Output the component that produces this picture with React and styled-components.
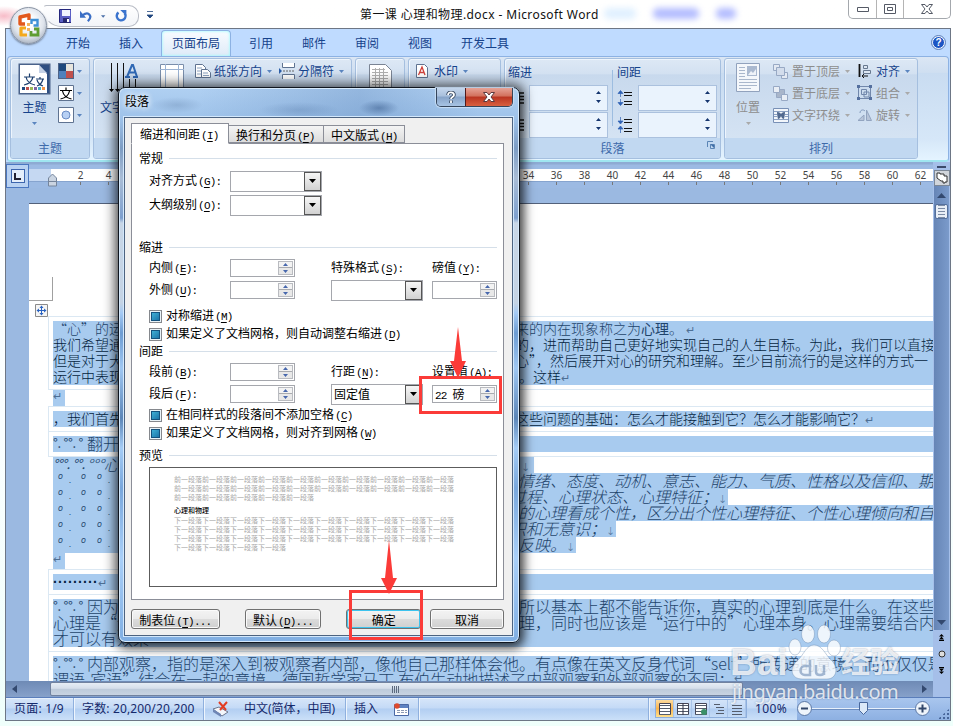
import React from "react";
import styled, { createGlobalStyle, css } from "styled-components";

const Global = createGlobalStyle`
  * { box-sizing: border-box; }
  body { margin: 0; background: #fdfeff; overflow: hidden; }
`;

const ui = css`font-family: "Noto Sans", "Noto Sans CJK SC", sans-serif;`;
const cjk = css`font-family: "Noto Sans CJK SC", sans-serif;`;

const Desktop = styled.div`
  ${cjk}
  position: relative;
  width: 953px;
  height: 726px;
  overflow: hidden;
  padding: 0 2px 5px 5px;
  font-size: 12px;
  line-height: 16px;
  color: #15428b;
  background:
    radial-gradient(ellipse 22px 10px at 4px 16px, #f7bcc8, transparent),
    linear-gradient(#fff, #fafeff 60%, #effffb);
  display: flex;
  flex-direction: column;
`;

/* ---------- title bar ---------- */
const TitleBar = styled.header`
  height: 28px;
  flex: none;
  display: flex;
  align-items: flex-start;
  justify-content: space-between;
`;
const QuickAccess = styled.div`
  display: flex;
  align-items: center;
  gap: 9px;
  width: 96px;
  height: 22px;
  margin: 5px 0 0 38px;
  padding: 0 11px 0 15px;
  border: 1px solid #b9bdc6;
  border-left-color: transparent;
  border-radius: 4px 11px 11px 20px;
  background: linear-gradient(#fff, #f2f4f8);
`;
const Customize = styled.div`margin: 11px 0 0 8px; height: 8px; svg { display: block; }`;
const TitleText = styled.div`
  ${ui}
  color: #111;
  margin: 7px 0 0 207px;
  width: 240px;
  font-size: 12px;
  letter-spacing: 0.42px;
  white-space: nowrap;
`;
const Smudges = styled.div`
  flex: 1;
  display: flex;
  padding: 8px 0 0 4px;
  gap: 17px;
`;
const Smudge = styled.i`
  width: ${(p) => p.$w}px;
  height: 11px;
  border-radius: 5px;
  background: ${(p) => p.$c || "#b4bdff"};
  filter: blur(3px);
`;
const Controls = styled.div`
  display: flex;
  width: 103px;
  height: 19px;
  border: 1px solid #a4a8ad;
  border-top: 0;
  border-radius: 0 0 5px 5px;
  background: #fff;
`;
const Control = styled.div`
  flex: ${(p) => p.$w} 0 0;
  display: grid;
  place-items: center;
  & + & { border-left: 1px solid #b4b4b4; }
`;
const OfficeButton = styled.div`
  position: absolute;
  left: 10px;
  top: 7px;
  width: 37px;
  height: 37px;
  border-radius: 50%;
  border: 1px solid #8a94a4;
  background: radial-gradient(circle at 50% 40%, #fff 0 20%, #dfe4ec 55%, #b4bdca 75%, #eef2f8 100%);
  box-shadow: 0 1px 2px #6d7b90;
  display: grid;
  place-items: center;
`;

/* ---------- window ---------- */
const Window = styled.main`
  flex: 1;
  min-height: 0;
  display: flex;
  flex-direction: column;
  border: 1px solid #6d7685;
  background: #bfdbff;
`;
const TabRow = styled.nav`
  height: 27px;
  flex: none;
  display: flex;
  align-items: flex-end;
  gap: 7px;
  padding: 0 5px 0 49px;
`;
const Tab = styled.div`
  height: 26px;
  padding: 5px 11px 0;
  border-radius: 4px 4px 0 0;
  ${(p) => p.$active && css`
    border: 1px solid #8db2e3;
    border-bottom: 0;
    padding: 4px 10px 0;
    box-shadow: inset 0 0 3px #8ff;
    background: linear-gradient(#f8fbff, #dfebf8);
  `}
`;
const HelpIcon = styled.div`
  margin-left: auto;
  align-self: center;
  width: 13px;
  height: 13px;
  border-radius: 50%;
  background: #1c55c4;
  border: 1px solid #fff;
  outline: 1px solid #5f80b8;
  color: #fff;
  font: bold 10px/11px "Liberation Sans", sans-serif;
  text-align: center;
`;
const Ribbon = styled.section`
  height: 106px;
  flex: none;
  margin: 0 1px;
  padding: 1px 3px 0 2px;
  display: flex;
  gap: 3px;
  border: 1px solid #8db2e3;
  border-bottom: 2px solid #9fe6f0;
  border-radius: 4px;
  background: linear-gradient(#dbe6f4, #cfdff1 15%, #c9dcf1 16%, #d6e7f8 80%, #e4f4ff);
`;
const Group = styled.div`
  flex: none;
  width: ${(p) => p.$w}px;
  height: 101px;
  display: flex;
  flex-direction: column;
  overflow: hidden;
  border: 1px solid #a5bfdf;
  border-radius: 3px;
  box-shadow: inset 1px 1px 0 #eef5fd;
  background: linear-gradient(#dde8f5, #d3e1f1 15%, #c8d9ed 16%, #d8e6f5);
`;
const GroupBody = styled.div`
  flex: 1;
  min-height: 0;
  display: flex;
  padding: ${(p) => p.$pt ?? 1}px 0 0 ${(p) => p.$pl}px;
  gap: ${(p) => p.$gap || 0}px;
`;
const GroupLabel = styled.div`
  height: 20px;
  flex: none;
  display: grid;
  grid-template-columns: 1fr auto 1fr;
  align-items: center;
  background: #c1d8f1;
  color: #3e6aaa;
  &::before { content: ""; }
  svg { display: block; justify-self: end; margin: -6px 5px 0 0; }
`;
const Big = styled.div`
  width: ${(p) => p.$w}px;
  height: 65px;
  padding-top: ${(p) => p.$pt ?? 3}px;
  flex: none;
  display: flex;
  flex-direction: column;
  align-items: center;
  white-space: nowrap;
  color: ${(p) => (p.$off ? "#8d8d8d" : "inherit")};
  svg { flex: none; }
`;
const BigText = styled.span`margin: auto 0 7px;`;
const Stack = styled.div`
  display: flex;
  flex-direction: column;
  width: ${(p) => p.$w}px;
  flex: none;
`;
const Item = styled.div`
  height: 22px;
  display: flex;
  align-items: center;
  gap: ${(p) => p.$gap ?? 0}px;
  white-space: nowrap;
  color: ${(p) => (p.$off ? "#8d8d8d" : "#15428b")};
`;
const IconSlot = styled.span`width: ${(p) => p.$w}px; flex: none; display: flex; align-items: center;`;
const ItemText = styled.span`margin-right: 5px;`;
const IndentColumn = styled.div`
  width: ${(p) => p.$w}px;
  flex: none;
  padding: 0 ${(p) => p.$pr || 0}px 0 ${(p) => p.$pl}px;
  ${(p) => p.$line && css`background: linear-gradient(#9dbde0, #9dbde0) 0 11px / 1px 56px no-repeat;`}
`;
const IndentTitle = styled.div`height: 26px; padding-top: 5px;`;
const IndentRow = styled.div`
  display: flex;
  align-items: center;
  justify-content: space-between;
  height: 26px;
  margin-bottom: 1px;
`;
const RibbonInput = styled.div`
  width: 79px;
  height: 26px;
  border: 1px solid #abc1de;
  background: #eaf3fd;
  display: flex;
  justify-content: flex-end;
  padding: 5px 6px 0 0;
`;

/* ---------- workspace ---------- */
const Workspace = styled.div`
  flex: 1;
  min-height: 0;
  display: flex;
  background: #9bb9e1;
`;
const Column = styled.div`
  width: 927px;
  flex: none;
  display: flex;
  flex-direction: column;
`;
const RulerRow = styled.div`
  height: 26px;
  flex: none;
  display: flex;
  padding-top: 2px;
  background: linear-gradient(#8eabd3 2px, #9cbae3 3px);
`;
const TabSelector = styled.div`
  width: 24px;
  height: 24px;
  border: 1px solid #4a77c0;
  background: #b9d2f2;
  display: grid;
  place-items: center;
`;
const SelectorFace = styled.div`
  width: 14px;
  height: 14px;
  border: 1px solid #3d66ae;
  background: #e4eefb;
  display: grid;
  place-items: center;
`;
const RulerMargin = styled.div`
  width: 23px;
  height: 12px;
  margin-top: 5px;
  background: #c5d8f2;
  box-shadow: 0 1px 0 #86a4cf;
`;
const RulerScale = styled.div`
  ${ui}
  flex: 1;
  height: 12px;
  margin-top: 5px;
  padding-left: 14px;
  display: flex;
  background: #fff;
  box-shadow: 0 1px 0 #86a4cf;
  font-size: 10px;
  line-height: 12px;
  color: #444;
`;
const Mark = styled.span`
  width: 28px;
  flex: none;
  text-align: center;
  padding-left: 3px;
  &::after { content: ""; display: block; width: 1px; height: 3px; margin: 1px auto; background: #777; }
`;
const IndentMarker = styled.div`position: absolute; left: 48px; top: 173px;`;
const Canvas = styled.div`
  flex: 1;
  min-height: 0;
  padding: 15px 0 0 23px;
`;
const Page = styled.article`
  position: relative;
  height: 100%;
  background: #fff;
  border-top: 1px solid #53617a;
  overflow: hidden;
  padding: 112px 0 0 19px;
`;
const CropMark = styled.i`
  position: absolute;
  left: 0;
  top: 73px;
  width: 24px;
  height: 24px;
  border: solid #a0a0a0;
  border-width: 0 1px 1px 0;
`;
const MoveHandle = styled.div`position: absolute; left: 6px; top: 100px; height: 13px; svg { display: block; }`;
const Block = styled.div`
  height: ${(p) => p.$h}px;
  padding: ${(p) => p.$pt}px 0 0 ${(p) => (p.$open ? 5 : 4)}px;
  border-top: 1px solid #dbe8f3;
  ${(p) => !p.$open && css`border-left: 1px solid #dbe8f3;`}
`;
const LineBox = styled.div`
  height: 16px;
  width: ${(p) => (p.$w ? p.$w + "px" : "auto")};
  display: flex;
  overflow: hidden;
  white-space: pre;
  background: #a8cbef;
  font-size: ${(p) => p.$size || 14}px;
  font-weight: 300;
  line-height: 14px;
  color: ${(p) => (p.$dark ? "#041e3e" : "#1f446b")};
  font-style: ${(p) => (p.$italic ? "italic" : "normal")};
`;
const Lead = styled.span`
  flex: none;
  width: ${(p) => p.$w}px;
  overflow: hidden;
`;
const Rest = styled.span`flex: none;`;
const Spaces = styled.span`
  display: inline-block;
  flex: none;
  width: 34px;
  font-size: 13px;
  line-height: 13px;
  font-weight: 400;
  letter-spacing: -0.3px;
  overflow: hidden;
  vertical-align: top;
`;
const RowMarks = styled.span`
  display: flex;
  padding-left: 5px;
  font: italic 8px/8px "DejaVu Sans", sans-serif;
`;
const RowMark = styled.span`
  width: ${(p) => p.$w}px;
  padding-top: ${(p) => p.$pt || 0}px;
`;
const Dots = styled.span`font: bold 14px/16px "Liberation Sans", sans-serif; letter-spacing: 0.33px;`;
const Return = styled.span`
  font-family: "DejaVu Sans", sans-serif;
  font-size: 11px;
  font-style: normal;
  color: #4d6f94;
`;

/* ---------- scrollbars ---------- */
const SideBar = styled.aside`
  width: 17px;
  flex: none;
  display: flex;
  flex-direction: column;
  align-items: center;
  background: #a5bfe9;
`;
const Splitter = styled.i`width: 9px; height: 2px; margin: 4px 0 2px; background: #3b4a6b;`;
const RulerToggle = styled.div`
  width: 16px;
  height: 16px;
  border: 1px solid #7c8796;
  background: #d1d5db;
  display: grid;
  place-items: center;
`;
const Track = styled.div`
  width: 15px;
  height: 444px;
  display: flex;
  flex-direction: column;
  align-items: center;
  justify-content: space-between;
  padding: 7px 0 5px;
  background: linear-gradient(90deg, #6685b6, #7b9bcb);
`;
const Thumb = styled.div`
  width: 13px;
  height: 15px;
  border: 1px solid #55709c;
  border-radius: 2px;
  background: linear-gradient(90deg, #e9eff7 2px, transparent 2px 9px, #e9eff7 9px), repeating-linear-gradient(#7b8ba5 0 1px, #e7edf5 1px 3px);
`;
const TrackTop = styled.div`display: flex; flex-direction: column; align-items: center; gap: 6px;`;
const Browse = styled.div`flex: 1; display: flex; flex-direction: column; align-items: center; padding-top: 4px; gap: 9px;`;
const HScroll = styled.div`
  height: 16px;
  flex: none;
  display: flex;
  align-items: center;
  justify-content: space-between;
  padding: 0 6px;
  background: linear-gradient(#6e8ab5, #86a1ca);
`;
const HThumb = styled.div`
  width: 693px;
  height: 14px;
  margin: 0 178px 0 31px;
  border: 1px solid #71829f;
  border-radius: 2px;
  background: linear-gradient(#e6edf5, #d5deea 45%, #bdcada 50%, #c8d3e2);
  display: grid;
  place-items: center;
`;
const Grip = styled.i`width: 8px; height: 7px; background: repeating-linear-gradient(90deg, #5c6a7e 0 1px, transparent 1px 2px);`;

/* ---------- status bar ---------- */
const Status = styled.footer`
  ${ui}
  height: 23px;
  flex: none;
  display: flex;
  border-top: 1px solid #5a7ebb;
  box-shadow: inset 0 1px 0 #e6f0fc;
  background: linear-gradient(#d7e6f9, #c4daf6 45%, #b2cef2 50%, #cbe0f8);
  color: #15296b;
  font-size: 12px;
`;
const Cell = styled.div`
  width: ${(p) => p.$w}px;
  flex: none;
  padding-left: 8px;
  display: flex;
  align-items: center;
  white-space: nowrap;
  letter-spacing: ${(p) => p.$ls || 0}px;
  border-right: ${(p) => (p.$plain ? 0 : 1)}px solid #8fb0de;
  box-shadow: ${(p) => (p.$plain ? "none" : "1px 0 0 #eef5fd")};
`;
const Views = styled.div`
  width: 92px;
  height: 19px;
  margin: 1px 0 0 6px;
  border: 1px solid #8daedc;
  display: flex;
`;
const View = styled.div`
  flex: 1;
  display: grid;
  place-items: center;
  border-right: 1px solid #a9c4e8;
  background: ${(p) => (p.$on ? "linear-gradient(#fbdba0,#fbb44d 50%,#ffe08c)" : "none")};
`;
const ZoomText = styled.div`width: 50px; padding: 3px 0 0 8px; letter-spacing: 0.4px;`;
const ZoomArea = styled.div`
  flex: 1;
  display: flex;
  align-items: center;
  padding-bottom: 1px;
  background: linear-gradient(#a9c6ee, #8db0e2);
`;
const Knob = styled.div`
  width: 15px;
  height: 15px;
  border: 1px solid #5a77a5;
  border-radius: 50%;
  background: #eef4fb;
  display: grid;
  place-items: center;
`;
const Rail = styled.div`
  width: 103px;
  height: 1px;
  background: #e7f0fb;
  box-shadow: 0 1px 0 #6d8ec0;
  display: flex;
  align-items: center;
  justify-content: center;
`;
const SizeGrip = styled.i`
  align-self: flex-end;
  width: 12px;
  height: 11px;
  margin-left: 8px;
  background: radial-gradient(#47659a 1.3px, transparent 1.5px) 0 0 / 4px 4px;
  clip-path: polygon(100% 0, 100% 100%, 0 100%);
`;

/* ---------- dialog ---------- */
const Dialog = styled.section`
  position: absolute;
  left: 118px;
  top: 87px;
  width: 402px;
  height: 556px;
  display: flex;
  flex-direction: column;
  padding: 0 6px 6px 5px;
  border: 1px solid #10161f;
  border-radius: 7px;
  box-shadow: inset 0 0 0 1px #d6e9fb, 0 0 12px 4px rgba(0, 0, 0, 0.55), 2px 4px 10px rgba(0, 0, 0, 0.45);
  background:
    radial-gradient(ellipse 26px 8px at 58px 17px, rgba(80, 110, 150, 0.25), transparent),
    radial-gradient(ellipse 40px 8px at 180px 22px, rgba(60, 95, 145, 0.22), transparent),
    radial-gradient(ellipse 20px 8px at 260px 20px, rgba(50, 85, 135, 0.5), transparent),
    linear-gradient(90deg, transparent 20%, rgba(40, 84, 146, 0.2) 60%, transparent 90%) 0 0 / 100% 30px no-repeat,
    linear-gradient(#b0d0f2 0, #9fc3ea 30px, #7d9dc4 60px, #a9bdd6 90px, #7d9fce 130px, #c8d6e6 135px, #c4d3e4 215px, #a4caf5 225px, #6d9cd2 245px, #9fc7f2 280px, #5c86b8 330px, #a5ccf5 360px, #79a7dc 400px, #a9cff8 470px, #80aee2);
  color: #000;
`;
const DialogTitle = styled.div`
  height: 29px;
  flex: none;
  display: flex;
  justify-content: space-between;
  padding: 5px 0 0 1px;
`;
const Caption = styled.span`text-shadow: 0 0 6px #fff, 0 0 6px #fff;`;
const CaptionButtons = styled.div`
  display: flex;
  width: 77px;
  height: 19px;
  margin-top: -5px;
  border: 1px solid #35455b;
  border-top: 0;
  border-radius: 0 0 5px 5px;
  overflow: hidden;
  box-shadow: 0 0 1px 1px #c9dff5;
`;
const CaptionButton = styled.div`
  width: ${(p) => p.$w}px;
  display: grid;
  place-items: center;
  border-left: ${(p) => (p.$close ? "1px solid #50191a" : 0)};
  background: ${(p) => (p.$close
    ? "linear-gradient(#e6a397,#d2705c 45%,#b93421 50%,#d9603f)"
    : "linear-gradient(#c4d6ec,#a8bfdc 45%,#86a3c8 50%,#a8c4e4)")};
`;
const Client = styled.div`
  flex: 1;
  min-height: 0;
  padding: 6px 8px 0 6px;
  border: 1px solid #4d6380;
  box-shadow: 0 0 0 1px #d3e8fc;
  background: #f0f0f0;
  display: flex;
  flex-direction: column;
`;
const DialogTabs = styled.div`display: flex; align-items: flex-end; height: 19px; position: relative;`;
const DialogTab = styled.div`
  width: ${(p) => p.$w}px;
  height: ${(p) => (p.$on ? 21 : 18)}px;
  margin-bottom: ${(p) => (p.$on ? -1 : 0)}px;
  padding: ${(p) => (p.$on ? 2 : 1)}px 0 0 ${(p) => (p.$on ? 8 : 7)}px;
  border: 1px solid #8b8e98;
  border-bottom-color: ${(p) => (p.$on ? "#fff" : "#8b8e98")};
  margin-left: ${(p) => (p.$on ? 0 : -1)}px;
  background: ${(p) => (p.$on ? "#fff" : "linear-gradient(#f4f4f4,#dcdcdc)")};
  white-space: nowrap;
`;
const Panel = styled.div`
  height: 457px;
  flex: none;
  padding: 6px 6px 0 7px;
  border: 1px solid #8b8e98;
  background: #fff;
`;
const Section = styled.div`
  height: 16px;
  margin-top: ${(p) => p.$mt || 0}px;
  display: flex;
  align-items: center;
  gap: 6px;
  &::after { content: ""; flex: 1; height: 1px; background: #d5dfe9; }
`;
const Fields = styled.div`
  display: grid;
  grid-template-columns: 81px 101px 101px 66px;
  align-items: center;
  height: ${(p) => p.$h}px;
  margin: ${(p) => p.$mt || 0}px 0 0 10px;
  white-space: nowrap;
`;
const Latin = styled.span`
  font-family: "Liberation Mono", monospace;
  font-size: 11px;
  letter-spacing: -0.75px;
  margin-left: ${(p) => (p.$gap ? 1 : 0)}px;
  u { text-underline-offset: 2px; }
`;
const Combo = styled.div`
  width: 92px;
  height: 21px;
  border: 1px solid #a5a7ad;
  display: flex;
  justify-content: space-between;
  padding-left: 2px;
  line-height: 18px;
`;
const ComboArrow = styled.div`
  width: 17px;
  height: 19px;
  border: 1px solid #555;
  background: linear-gradient(#f6f6f6, #d2d2d2);
  display: grid;
  place-items: center;
`;
const Spin = styled.div`
  width: 65px;
  height: 18px;
  border: 1px solid #a5a7ad;
  display: flex;
  justify-content: space-between;
  padding: 1px 1px 0 2px;
  line-height: 14px;
`;
const SpinButtons = styled.div`
  width: 15px;
  height: 14px;
  border: 1px solid #b9bbc0;
  background: linear-gradient(#f3f3f3 5px, #a9abb0 5px 6px, #e8e8e8 6px);
  display: grid;
  place-items: center;
`;
const Check = styled.div`
  height: 18px;
  margin: ${(p) => p.$mt || 0}px 0 0 10px;
  display: flex;
  align-items: center;
  white-space: nowrap;
  gap: 4px;
`;
const CheckBox = styled.i`
  width: 13px;
  height: 13px;
  border: 1px solid #85888d;
  box-shadow: inset 0 0 0 1px #e9f3f8, inset 0 0 0 2px #14527e;
  background: linear-gradient(135deg, #49c0e2, #12659c);
`;
const Preview = styled.div`
  width: 348px;
  height: 120px;
  margin: 4px 0 0 10px;
  padding: 7px 0 0 24px;
  border: 1px solid #5c5c5c;
  font-size: 7px;
  line-height: 9px;
  color: #a8a8a8;
  white-space: nowrap;
`;
const PreviewTitle = styled.div`color: #000; height: 10px; margin-top: 4px; font-weight: 500;`;
const Buttons = styled.div`display: flex; padding-top: 9px;`;
const Button = styled.div`
  width: ${(p) => p.$w}px;
  height: 20px;
  margin-right: ${(p) => p.$mr || 0}px;
  border: 1px solid #707070;
  border-radius: 3px;
  box-shadow: ${(p) => (p.$primary ? "inset 0 0 0 1px #3dc3ee" : "inset 0 0 0 1px #fafafa")};
  background: linear-gradient(#f3f3f3, #ebebeb 48%, #dcdcdc 50%, #cfcfcf);
  text-align: center;
  line-height: 19px;
`;

/* ---------- annotations and watermark ---------- */
const Highlight = styled.i`
  position: absolute;
  left: ${(p) => p.$x}px;
  top: ${(p) => p.$y}px;
  width: ${(p) => p.$w}px;
  height: ${(p) => p.$h}px;
  border: 3px solid #fb3b38;
`;
const Arrow = styled.svg`
  position: absolute;
  left: ${(p) => p.$x}px;
  top: ${(p) => p.$y}px;
`;
const Watermark = styled.div`
  position: absolute;
  left: 730px;
  top: 620px;
  width: 180px;
  height: 86px;
  color: rgba(255, 255, 255, 0.8);
  text-shadow: 0 0 2px rgba(70, 100, 140, 0.6);
`;
const Paw = styled.svg`position: absolute; left: 57px; top: 3px;`;
const Brand = styled.div`
  display: flex;
  align-items: flex-end;
  height: 60px;
  font: bold 37px/34px "Liberation Sans", "Noto Sans CJK SC", sans-serif;
`;
const BrandLatin = styled.span`width: 111px;`;
const BrandCjk = styled.span`font-size: 29px; white-space: nowrap;`;
const Site = styled.div`
  font: 20px/24px "Noto Sans", sans-serif;
  margin-left: 2px;
  letter-spacing: -0.4px;
`;

/* ---------- icons ---------- */
const Down = ({ c = "#5b85bf", w = 5 }) => (
  <svg width={w} height="3" viewBox="0 0 5 3"><path d="M0 0h5L2.5 3z" fill={c} /></svg>
);
const UpDown = ({ c = "#15356e", gap = 7, w = 5 }) => (
  <svg width={w} height={gap + 6} viewBox={`0 0 5 ${gap + 6}`}>
    <path d={`M0 3h5L2.500 0zM0 ${gap + 3}h5L2.500 ${gap + 6}z`} fill={c} />
  </svg>
);
const Logo = () => (
  <svg width="24" height="26" viewBox="0 0 24 26" fill="none">
    <path d="M8 11H3V4l9-2v5" stroke="#e2581c" strokeWidth="3.400" strokeLinejoin="round" />
    <path d="M14.500 11V7h6v5.500h-4" stroke="#3f91d6" strokeWidth="2.400" />
    <path d="M10 22H4v-7h5" stroke="#f4a91c" strokeWidth="3.200" strokeLinejoin="round" />
    <path d="M14 18v4h7v-6h-4" stroke="#5f9d32" strokeWidth="2.800" />
    <path d="M10 10h3v3h-3zM10 15h3v3h-3z" fill="#f3b25c" />
  </svg>
);
const SaveIcon = () => (
  <svg width="14" height="14"><path d="M.5.5h13v13H.5z" fill="#5a5fc4" stroke="#25277c" /><path d="M3 1h8v6H3z" fill="#eef3fd" /><path d="M4 9h6v5H4z" fill="#272a6f" /><path d="M8 10h2v3H8z" fill="#fff" /></svg>
);
const UndoIcon = () => (
  <svg width="14" height="13" viewBox="0 0 14 13" fill="none"><path d="M3 5c7-5 12 1 6 7" stroke="#3b6fc5" strokeWidth="2.600" /><path d="M0 0v8h7z" fill="#3b6fc5" /></svg>
);
const RedoIcon = () => (
  <svg width="14" height="14" viewBox="0 0 14 14" fill="none"><path d="M4 3a5 5 0 1 0 7 1" stroke="#3b74ce" strokeWidth="2.800" /><path d="M6 0h7v7z" fill="#3b74ce" /></svg>
);
const ThemeIcon = () => (
  <svg width="33" height="32"><path d="M.5.500h32v31H.5z" fill="#4a628a" /><path d="M2 2h29v28H2z" fill="#fff" /><path d="M21 2h10v28h-2V11z" fill="#2f4f82" /><path d="M21 2v8h8z" fill="#c5d2e6" /><path d="M6 14h11M11.500 10.500v3.500M8 14c1 5 4 7 9 8M15 14c-1 4-4 7-9 8M18 16h8M22 14v2M19 17c1 3 3 5 6 6M25 16c-1 4-3 6-6 7" stroke="#1c3e6e" fill="none" strokeWidth="1.200" />{["#1f497d", "#c0504d", "#9bbb59", "#8064a2", "#4bacc6", "#f79646"].map((c, i) => <path key={c} d={`M${4 + i * 4} 24h3v3h-3z`} fill={c} />)}</svg>
);
const ColorsIcon = () => (
  <svg width="16" height="16"><path d="M0 0h16v16H0z" fill="#4f6487" /><path d="M1 1h7v7H1z" fill="#1f497d" /><path d="M8 1h7v7H8z" fill="#e7e5dd" /><path d="M1 8h7v7H1z" fill="#4f81bd" /><path d="M8 8h7v7H8z" fill="#c0504d" /></svg>
);
const FontsIcon = () => (
  <svg width="16" height="16"><path d="M.5.500h15v15H.5z" fill="#fff" stroke="#5f7391" /><path d="M2 5.500h12M8 2.500v3M4.500 6c1 5 4 7 9 8M11.500 6c-1 5-4 7-9 8" stroke="#000" fill="none" strokeWidth="1.200" /></svg>
);
const EffectsIcon = () => (
  <svg width="16" height="16"><path d="M.5.500h15v15H.5z" fill="#fff" stroke="#5f7391" /><circle cx="8" cy="8" r="4" fill="#b7d0f4" stroke="#6b8cc4" /></svg>
);
const TextDirIcon = () => (
  <svg width="30" height="32"><path d="M2.500 0v28M8.500 0v28M14.500 0v28M20.500 16v12M26.500 16v12" stroke="#111" /><path d="M0 26h5l-2.500 3zM6 26h5l-2.500 3z" /><path d="M16 14h5M24 14h5M18 14l5-12h1l4 12M19.500 9.500h7" stroke="#2f68b4" strokeWidth="2" fill="none" /></svg>
);
const MarginsIcon = () => (
  <svg width="24" height="30"><path d="M.5.500h23v29H.5z" fill="#fff" stroke="#7a8eab" /><path d="M5.500 0v30M18.500 0v30M0 5.500h24" stroke="#9bb3d3" /></svg>
);
const OrientIcon = () => (
  <svg width="17" height="15"><path d="M.5.500h7l3 3v10H.5z" fill="#fff" stroke="#5f7391" /><path d="M6.500 5.500h6l3 3v5h-9z" fill="#fff" stroke="#5f7391" /><path d="M2 4h5M2 7h4M2 10h4M8 9h5M8 11.500h6" stroke="#8da3c1" /></svg>
);
const BreakIcon = () => (
  <svg width="16" height="16"><path d="M3.500 0v4.500h12V0M3.500 16v-4.500h12V16" fill="#fff" stroke="#5f7391" /><path d="M4 8h12" stroke="#666" strokeDasharray="2 1" /><path d="M0 5l3 3-3 3z" fill="#2c5ea8" /></svg>
);
const PaperIcon = () => (
  <svg width="23" height="30"><path d="M.5.500h16l6 6v23H.5z" fill="#fff" stroke="#7a8494" /><path d="M3 5.500h13M3 8.500h16M3 11.500h16M3 14.500h16M3 17.500h16M3 20.500h16M3 23.500h16M6.500 4v22M10.500 4v22M14.500 4v22" stroke="#b0b0b0" /></svg>
);
const WaterIcon = () => (
  <svg width="12" height="14"><path d="M.5.500h8l3 3v10H.5z" fill="#fff" stroke="#5f7391" /><path d="M2.500 11L6 3l3 8M3.500 8.500h5" stroke="#d0413b" fill="none" strokeWidth="1.300" /></svg>
);
const IndentIcon = () => (
  <svg width="17" height="12"><path d="M3 1h13M9 4.500h7M9 7.500h7M3 11h13" stroke="#111" strokeWidth="1.300" /><path d="M8 6H3M5 3.500L2 6l3 2.500" stroke="#2f62b4" fill="none" /></svg>
);
const SpaceIcon = ({ flip }) => (
  <svg width="17" height="16"><path d="M7 2.500h8M7 5.500h8M7 11.500h8M7 14.500h8" stroke="#111" /><path d={flip ? "M3.500 0v6M1 4l2.500 3L6 4zM3.500 16v-6M1 12l2.500-3L6 12z" : "M3.500 7V1M1 3.500l2.500-3 2.500 3zM3.500 9v6M1 12.500l2.500 3 2.500-3z"} fill="#2f62b4" stroke="#2f62b4" strokeWidth=".7" /></svg>
);
const PositionIcon = () => (
  <svg width="24" height="29"><path d="M.5.500h23v28H.5z" fill="#f4f7fb" stroke="#91a2bd" /><path d="M3 4.500h6M3 7.500h6M3 10.500h6M3 13.500h6M3 16.500h18M3 19.500h18M3 22.500h18M3 25.500h12" stroke="#a9b7cc" /><path d="M11 3h10v10H11z" fill="#aab9d0" /><path d="M12 12l3-4 2 2 3-4v6z" fill="#eef2f8" /></svg>
);
const LayerIcon = ({ back }) => (
  <svg width="15" height="15">
    {!back && <path d="M.5.500h6v6h-6zM8.500 8.500h6v6h-6z" fill="#e3e9f2" stroke="#98a9c4" />}
    <path d="M3.500 3.500h8v8h-8z" fill={back ? "#a9b6ca" : "#d3ddec"} stroke="#98a9c4" />
    {back && <path d="M.5.500h6v6h-6zM8.500 8.500h6v6h-6z" fill="#e9eef5" stroke="#98a9c4" />}
  </svg>
);
const WrapIcon = () => (
  <svg width="16" height="15"><path d="M.5.500h15v14H.5z" fill="#f2f6fb" stroke="#7890b6" /><path d="M1 3.500h14M1 11.500h14M1 6.500h3M12 6.500h3M1 8.500h3M12 8.500h3" stroke="#8ca1c2" /><path d="M4 4c3 0 4 2 4 2s1-2 4-2c0 3-1 7-1 7s-2 0-3-3c-1 3-3 3-3 3s-1-4-1-7" fill="#51698f" /></svg>
);
const AlignIcon = () => (
  <svg width="16" height="14"><path d="M2.500 0v13" stroke="#111" strokeWidth="1.800" /><path d="M6.500 1.500h4v3h-4zM6.500 6.500h7v3h-7z" fill="#dce6f2" stroke="#67788f" /><path d="M5 12h6M7 10l-2 2 2 2" stroke="#111" fill="none" /></svg>
);
const GroupIcon = () => (
  <svg width="16" height="16"><path d="M1.500 1.500h12v12h-12zM4.500 4.500h5v5h-5zM7 7h5v5H7z" fill="none" stroke="#7187ab" /><path d="M0 0h3v3H0zM12 0h3v3h-3zM0 12h3v3H0zM12 12h3v3h-3z" fill="#55709f" /></svg>
);
const RotateIcon = () => (
  <svg width="16" height="14"><path d="M1 12.500h6V7zM9.500 2v10.500h5z" fill="#b7c4d8" stroke="#92a4c0" /><path d="M3 5c0-3 3-4 5-2" stroke="#8299bd" fill="none" /></svg>
);
const LauncherIcon = () => (
  <svg width="8" height="8"><path d="M.5 6V.500H6M3.500 3.500h4v4h-4z" stroke="#5b85b5" fill="none" /><path d="M3 3l4 4V4z" fill="#3f6ea8" /></svg>
);
const MoveIcon = () => (
  <svg width="13" height="13"><path d="M.5.500h12v12H.5z" fill="#f5f5f5" stroke="#8a8a8a" /><path d="M6.500 2v9M2 6.500h9" stroke="#2a62c0" /><path d="M6.500 1.500L4.500 4h4zM6.500 11.500l-2-2.500h4zM1.500 6.500L4 4.500v4zM11.500 6.500L9 4.500v4z" fill="#2a62c0" /></svg>
);
const ViewIcon = ({ kind }) => (
  <svg width="12" height="12">
    {kind < 3 && <path d="M.5.500h11v11H.5z" fill="#fff" stroke="#445" />}
    <path d={kind === 3 ? "M1 1.500h6M3 4.500h8M5 7.500h6M3 10.500h8" : "M1 2.500h10M1 5.500h10M1 8.500h10M1 11.500h10"} stroke="#555d6c" />
    {kind === 1 && <path d="M6 0v12" stroke="#334" />}
    {kind === 2 && <circle cx="9" cy="9" r="3" fill="#3b8f68" />}
  </svg>
);
const ProofIcon = () => (
  <svg width="17" height="16"><path d="M1 8l6-2 9 5-6 4z" fill="#f4f7fb" stroke="#6d7890" /><path d="M1 8l8 5v3L1 11z" fill="#6f86b5" /><path d="M7 1l7 8M15 1L8 9" stroke="#e23c22" strokeWidth="2" /></svg>
);
const MacroIcon = () => (
  <svg width="15" height="13"><path d="M.5 1.500h14v11H.5z" fill="#fff" stroke="#4968a5" /><path d="M1 2h13v3H1z" fill="#5d82c2" /><path d="M3 7.500h10M3 9.500h10" stroke="#8b9ab4" strokeDasharray="3 1" /><circle cx="3" cy="3" r="2.800" fill="#dd4a2e" /></svg>
);

const Key = ({ k, end = "" }) => <Latin $gap>(<u>{k}</u>){end}</Latin>;
const ComboBox = ({ children }) => (
  <Combo><span>{children}</span><ComboArrow><svg width="7" height="4"><path d="M0 0h7L3.500 4z" /></svg></ComboArrow></Combo>
);
const SpinBox = ({ children }) => (
  <Spin><span>{children}</span><SpinButtons><UpDown c="#4868ad" gap={4} /></SpinButtons></Spin>
);
const RibbonSpin = () => <RibbonInput><UpDown gap={6} /></RibbonInput>;
const Line = ({ lead, at = 462, rest, ...p }) => (
  <LineBox {...p}><Lead $w={at}>{lead}</Lead><Rest>{rest}</Rest></LineBox>
);
const Command = ({ icon, slot = 19, off, children }) => (
  <Item $off={off}><IconSlot $w={slot}>{icon}</IconSlot><ItemText>{children}</ItemText><Down c={off ? "#a9a9a9" : undefined} /></Item>
);
const marks = <Spaces>°. °°. °</Spaces>;
const rowMarks = (
  <RowMarks>
    <RowMark $w={11}>o</RowMark><RowMark $w={12} $pt={4}>.</RowMark><RowMark $w={16}>o</RowMark>
    <RowMark $w={11}>o</RowMark><RowMark $w={8} $pt={4}>.</RowMark>
  </RowMarks>
);
const marksBefore = "前一段落".repeat(10);
const marksAfter = "下一段落".repeat(10);

export default function App() {
  const numbers = Array.from({ length: 31 }, (_, i) => (i + 1) * 2);
  return (
    <Desktop lang="zh-CN">
      <Global />
      <TitleBar>
        <QuickAccess><SaveIcon /><UndoIcon /><Down c="#4a6fa8" /><RedoIcon /></QuickAccess>
        <Customize><svg width="6" height="8"><path d="M0 .5h6M0 4h6L3 7z" fill="#21477f" stroke="#21477f" strokeWidth=".8" /></svg></Customize>
        <TitleText>第一课 心理和物理.docx - Microsoft Word</TitleText>
        <Smudges><Smudge $w={32} $c="#e0f0ff" /><Smudge $w={46} /><Smudge $w={20} /></Smudges>
        <Controls>
          <Control $w={28}><svg width="12" height="5"><path d="M.5.500h11v4H.5z" fill="#fff" stroke="#555a66" /></svg></Control>
          <Control $w={27}><svg width="12" height="10"><path d="M.5.500h11v9H.5zM3.500 3.500h5v3h-5z" fill="#fff" stroke="#555a66" /></svg></Control>
          <Control $w={47}><svg width="12" height="10"><path d="M.5.500h3.500l2 2.500 2-2.500h3.500L8 5l3.500 4.500H8L6 7 4 9.500H.5L4 5z" fill="#fff" stroke="#555a66" /></svg></Control>
        </Controls>
      </TitleBar>

      <Window>
        <TabRow>
          {["开始", "插入", "页面布局", "引用", "邮件", "审阅", "视图", "开发工具"].map((t) => (
            <Tab key={t} $active={t === "页面布局"}>{t}</Tab>
          ))}
          <HelpIcon>?</HelpIcon>
        </TabRow>
        <Ribbon>
          <Group $w={80}>
            <GroupBody $pl={7} $gap={7}>
              <Big $w={33}><ThemeIcon /><BigText>主题</BigText><Down /></Big>
              <Stack $w={32}>
                <Item $gap={3}><ColorsIcon /><Down /></Item>
                <Item $gap={3}><FontsIcon /><Down /></Item>
                <Item $gap={3}><EffectsIcon /><Down /></Item>
              </Stack>
            </GroupBody>
            <GroupLabel><span>主题</span></GroupLabel>
          </Group>
          <Group $w={259}>
            <GroupBody $pl={5}>
              <Big $w={50}><TextDirIcon /><BigText>文字方向</BigText><Down /></Big>
              <Big $w={46} $pt={4}><MarginsIcon /></Big>
              <Stack $w={84}><Command icon={<OrientIcon />}>纸张方向</Command></Stack>
              <Stack $w={70}><Command icon={<BreakIcon />}>分隔符</Command></Stack>
            </GroupBody>
            <GroupLabel><span>页面设置</span></GroupLabel>
          </Group>
          <Group $w={50}>
            <GroupBody $pl={0}><Big $w={48} $pt={4}><PaperIcon /></Big></GroupBody>
            <GroupLabel><span>稿纸</span></GroupLabel>
          </Group>
          <Group $w={93}>
            <GroupBody $pl={7}><Stack $w={80}><Command slot={18} icon={<WaterIcon />}>水印</Command></Stack></GroupBody>
            <GroupLabel><span>页面背景</span></GroupLabel>
          </Group>
          <Group $w={217}>
            <GroupBody $pl={3} $pt={0}>
              <IndentColumn $w={104} $pl={0} $pr={4}>
                <IndentTitle>缩进</IndentTitle>
                <IndentRow><IndentIcon /><RibbonSpin /></IndentRow>
                <IndentRow><IndentIcon /><RibbonSpin /></IndentRow>
              </IndentColumn>
              <IndentColumn $w={105} $pl={5} $line>
                <IndentTitle>间距</IndentTitle>
                <IndentRow><SpaceIcon /><RibbonSpin /></IndentRow>
                <IndentRow><SpaceIcon flip /><RibbonSpin /></IndentRow>
              </IndentColumn>
            </GroupBody>
            <GroupLabel><span>段落</span><LauncherIcon /></GroupLabel>
          </Group>
          <Group $w={194}>
            <GroupBody $pl={4}>
              <Big $w={38} $off><PositionIcon /><BigText>位置</BigText><Down c="#a9a9a9" /></Big>
              <Stack $w={6} />
              <Stack $w={84}>
                <Command off icon={<LayerIcon />}>置于顶层</Command>
                <Command off icon={<LayerIcon back />}>置于底层</Command>
                <Command off icon={<WrapIcon />}>文字环绕</Command>
              </Stack>
              <Stack $w={60}>
                <Command icon={<AlignIcon />}>对齐</Command>
                <Command off icon={<GroupIcon />}>组合</Command>
                <Command off icon={<RotateIcon />}>旋转</Command>
              </Stack>
            </GroupBody>
            <GroupLabel><span>排列</span></GroupLabel>
          </Group>
        </Ribbon>

        <Workspace>
          <Column>
            <RulerRow>
              <TabSelector><SelectorFace><svg width="7" height="7"><path d="M1 0v6h6" stroke="#223" strokeWidth="2" fill="none" /></svg></SelectorFace></TabSelector>
              <RulerMargin />
              <RulerScale>{numbers.map((n) => <Mark key={n}>{n}</Mark>)}</RulerScale>
            </RulerRow>
            <Canvas>
              <Page>
                <CropMark />
                <MoveHandle><MoveIcon /></MoveHandle>
                <Block $h={73} $pt={4}>
                  <Line lead="“心”的运行" rest={<>来的内在现象称之为<b>心理</b>。<Return> ↵</Return></>} />
                  <Line $dark lead="我们希望通过" rest="的，进而帮助自己更好地实现自己的人生目标。为此，我们可以直接" />
                  <Line $dark lead="但是对于大多" rest="心”，然后展开对心的研究和理解。至少目前流行的是这样的方式一" />
                  <Line $dark at={466} lead="运行中表现出" rest={<>。这样<Return>↵</Return></>} />
                </Block>
                <Block $open $h={17} $pt={0}><LineBox $w={12}><Return>↵</Return></LineBox></Block>
                <Block $h={25} $pt={4}>
                  <Line $dark lead="，我们首先要" rest={<>这些问题的基础：怎么才能接触到它？怎么才能影响它？<Return>↵</Return></>} />
                </Block>
                <Block $h={25} $pt={4}><Line $size={16} lead={<>{marks}翻开心理</>} /></Block>
                <Block $open $h={113} $pt={0}>
                  <Line $italic $size={16} $w={481} at={468} lead={<><Spaces>°°°. °°.</Spaces>°°°心理</>} rest={<Return>↓</Return>} />
                  <Line $italic $size={16} at={465} lead={rowMarks} rest="情绪、态度、动机、意志、能力、气质、性格以及信仰、期" />
                  <Line $italic $size={16} $w={675} at={457} lead={rowMarks} rest={<>过程、心理状态、心理特征；<Return>↓</Return></>} />
                  <Line $italic $size={16} at={465} lead={rowMarks} rest="的心理看成个性，区分出个性心理特征、个性心理倾向和自" />
                  <Line $italic $size={16} $w={563} at={457} lead={rowMarks} rest={<>识和无意识；<Return>↓</Return></>} />
                  <Line $italic $size={16} $w={523} at={465} lead={rowMarks} rest={<>反映。<Return>↓</Return></>} />
                  <LineBox $w={12}><Return>↵</Return></LineBox>
                </Block>
                <Block $h={25} $pt={4}><Line $dark lead={<><Dots>·········</Dots><Return>↵</Return></>} /></Block>
                <Block $h={57} $pt={4}>
                  <Line $size={16} at={466} lead={<>{marks}因为心理</>} rest="所以基本上都不能告诉你，真实的心理到底是什么。在这些" />
                  <Line $size={16} at={466} lead="心理是“运行" rest="理，同时也应该是“运行中的”心理本身。心理需要结合内" />
                  <Line $size={16} lead="才可以有效果" />
                </Block>
                <Block $h={40} $pt={4}>
                  <LineBox $size={16}>{marks}内部观察，指的是深入到被观察者内部，像他自己那样体会他。有点像在英文反身代词“self”所传递的意境，而不仅仅是</LineBox>
                  <LineBox $size={16}>谓语-宾语”结合在一起的意境。德国哲学家马丁.布伯生动地描述了内部观察和外部观察的不同：<Return>↵</Return></LineBox>
                </Block>
              </Page>
            </Canvas>
            <HScroll>
              <svg width="5" height="8"><path d="M5 0v8L0 4z" fill="#33496f" /></svg>
              <HThumb><Grip /></HThumb>
              <svg width="5" height="8"><path d="M0 0v8l5-4z" fill="#33496f" /></svg>
            </HScroll>
          </Column>
          <SideBar>
            <Splitter />
            <RulerToggle><svg width="12" height="12"><path d="M1 1h3v1h4v2h3v6H9v1H7V9H5L1 6z" fill="#fff" stroke="#333" /></svg></RulerToggle>
            <Track>
              <TrackTop><svg width="9" height="5"><path d="M0 5h9L4.500 0z" fill="#33496f" /></svg><Thumb /></TrackTop>
              <svg width="9" height="5"><path d="M0 0h9L4.500 5z" fill="#33496f" /></svg>
            </Track>
            <Browse>
              <svg width="5" height="7"><path d="M0 2.500h5L2.500 0zM0 5.500h5L2.500 2.500zM0 6h5v1H0z" /></svg>
              <svg width="8" height="8"><circle cx="4" cy="4" r="3" fill="#ddd" stroke="#333" /></svg>
              <svg width="5" height="7"><path d="M0 0h5v1H0zM0 1.500h5L2.500 4.500zM0 4.500h5L2.500 7z" /></svg>
            </Browse>
          </SideBar>
        </Workspace>

        <Status>
          <Cell $w={68} $ls={0.2}>页面: 1/9</Cell>
          <Cell $w={130} $ls={0.15}>字数: 20,200/20,200</Cell>
          <Cell $w={32} $plain><ProofIcon /></Cell>
          <Cell $w={110}>中文(简体，中国)</Cell>
          <Cell $w={40} $plain>插入</Cell>
          <Cell $w={33}><MacroIcon /></Cell>
          <Cell $w={230} />
          <Views>{[0, 1, 2, 3, 4].map((k) => <View key={k} $on={k === 0}><ViewIcon kind={k} /></View>)}</Views>
          <ZoomText>100%</ZoomText>
          <ZoomArea>
            <Knob><svg width="9" height="9"><path d="M1 4.500h7" stroke="#32476b" strokeWidth="2" /></svg></Knob>
            <Rail><svg width="9" height="13"><path d="M.5.500h8v8l-4 4-4-4z" fill="#dce9f8" stroke="#48679b" /></svg></Rail>
            <Knob><svg width="9" height="9"><path d="M.5 4.500h8M4.500.500v8" stroke="#32476b" strokeWidth="2" /></svg></Knob>
            <SizeGrip />
          </ZoomArea>
        </Status>
      </Window>

      <OfficeButton><Logo /></OfficeButton>
      <IndentMarker><svg width="9" height="14"><path d="M.5 5l4-4 4 4v8h-8zM0 8.500h9" fill="#cbd5e2" stroke="#75859c" /></svg></IndentMarker>

      <Dialog>
        <DialogTitle>
          <Caption>段落</Caption>
          <CaptionButtons>
            <CaptionButton $w={28}><svg width="10" height="12" viewBox="0 0 10 12" fill="none"><path d="M2 4c0-4 6-3 6 0 0 2-3 2-3 4M5 9.500V12" stroke="#37475e" strokeWidth="3.500" /><path d="M2 4c0-4 6-3 6 0 0 2-3 2-3 4M5 9.500V12" stroke="#fff" strokeWidth="1.800" /></svg></CaptionButton>
            <CaptionButton $w={48} $close><svg width="12" height="10"><path d="M.5.500h3.500l2 2.500 2-2.500h3.500L8 5l3.500 4.500H8L6 7 4 9.500H.5L4 5z" fill="#fff" stroke="#5c3a3e" /></svg></CaptionButton>
          </CaptionButtons>
        </DialogTitle>
        <Client>
          <DialogTabs>
            <DialogTab $on $w={98}>缩进和间距<Key k="I" /></DialogTab>
            <DialogTab $w={96}>换行和分页<Key k="P" /></DialogTab>
            <DialogTab $w={82}>中文版式<Key k="H" /></DialogTab>
          </DialogTabs>
          <Panel>
            <Section>常规</Section>
            <Fields $h={24} $mt={3}><span>对齐方式<Key k="G" end=":" /></span><ComboBox /></Fields>
            <Fields $h={24}><span>大纲级别<Key k="O" end=":" /></span><ComboBox /></Fields>
            <Section $mt={22}>缩进</Section>
            <Fields $h={22} $mt={2}><span>内侧<Key k="E" end=":" /></span><SpinBox /><span>特殊格式<Key k="S" end=":" /></span><span>磅值<Key k="Y" end=":" /></span></Fields>
            <Fields $h={22}><span>外侧<Key k="U" end=":" /></span><SpinBox /><ComboBox /><SpinBox /></Fields>
            <Check $mt={6}><CheckBox /><span>对称缩进<Key k="M" /></span></Check>
            <Check><CheckBox /><span>如果定义了文档网格，则自动调整右缩进<Key k="D" /></span></Check>
            <Section>间距</Section>
            <Fields $h={22} $mt={2}><span>段前<Key k="B" end=":" /></span><SpinBox /><span>行距<Key k="N" end=":" /></span><span>设置值<Key k="A" end=":" /></span></Fields>
            <Fields $h={22}><span>段后<Key k="F" end=":" /></span><SpinBox /><ComboBox>固定值</ComboBox><SpinBox><Latin>22 </Latin>磅</SpinBox></Fields>
            <Check $mt={1}><CheckBox /><span>在相同样式的段落间不添加空格<Key k="C" /></span></Check>
            <Check><CheckBox /><span>如果定义了文档网格，则对齐到网格<Key k="W" /></span></Check>
            <Section $mt={5}>预览</Section>
            <Preview>
              <div>{marksBefore}</div><div>{marksBefore}</div><div>{marksBefore.slice(0, 20)}</div>
              <PreviewTitle>心理和物理</PreviewTitle>
              <div>{marksAfter}</div><div>{marksAfter}</div><div>{marksAfter}</div><div>{marksAfter.slice(0, 16)}</div>
            </Preview>
          </Panel>
          <Buttons>
            <Button $w={89} $mr={25}>制表位<Key k="T" end="..." /></Button>
            <Button $w={77} $mr={25}>默认<Key k="D" end="..." /></Button>
            <Button $w={75} $mr={9} $primary>确定</Button>
            <Button $w={74}>取消</Button>
          </Buttons>
        </Client>
      </Dialog>

      <Highlight $x={419} $y={376} $w={83} $h={38} />
      <Highlight $x={349} $y={590} $w={74} $h={50} />
      <Arrow $x={450} $y={327} width="16" height="51"><path d="M8 0l4 34h4L8 51 0 34h4z" fill="#fb3b38" /></Arrow>
      <Arrow $x={381} $y={540} width="16" height="54"><path d="M8 0l4 38h4L8 54 0 38h4z" fill="#fb3b38" /></Arrow>

      <Watermark>
        <Paw width="58" height="60" viewBox="0 0 58 60" fill="rgba(255,255,255,.8)" stroke="rgba(90,120,160,.35)">
          <ellipse cx="8" cy="24" rx="6" ry="8" /><ellipse cx="21" cy="11" rx="6.500" ry="9" />
          <ellipse cx="37" cy="11" rx="6.500" ry="9" /><ellipse cx="47" cy="25" rx="6.500" ry="8" />
          <path d="M27 22c8 0 11 9 17 15 8 7 6 19-4 19H15c-11 0-13-11-5-18 7-6 9-16 17-16z" />
          <path d="M23 37v15h-5a4 4 0 0 1 0-9h5M29 42v7c0 4 8 4 8 0v-7M37 42v10" fill="none" stroke="rgba(110,140,180,.6)" strokeWidth="2.500" />
        </Paw>
        <Brand><BrandLatin>Bai</BrandLatin><BrandCjk>经验</BrandCjk></Brand>
        <Site>jingyan.baidu.com</Site>
      </Watermark>
    </Desktop>
  );
}
